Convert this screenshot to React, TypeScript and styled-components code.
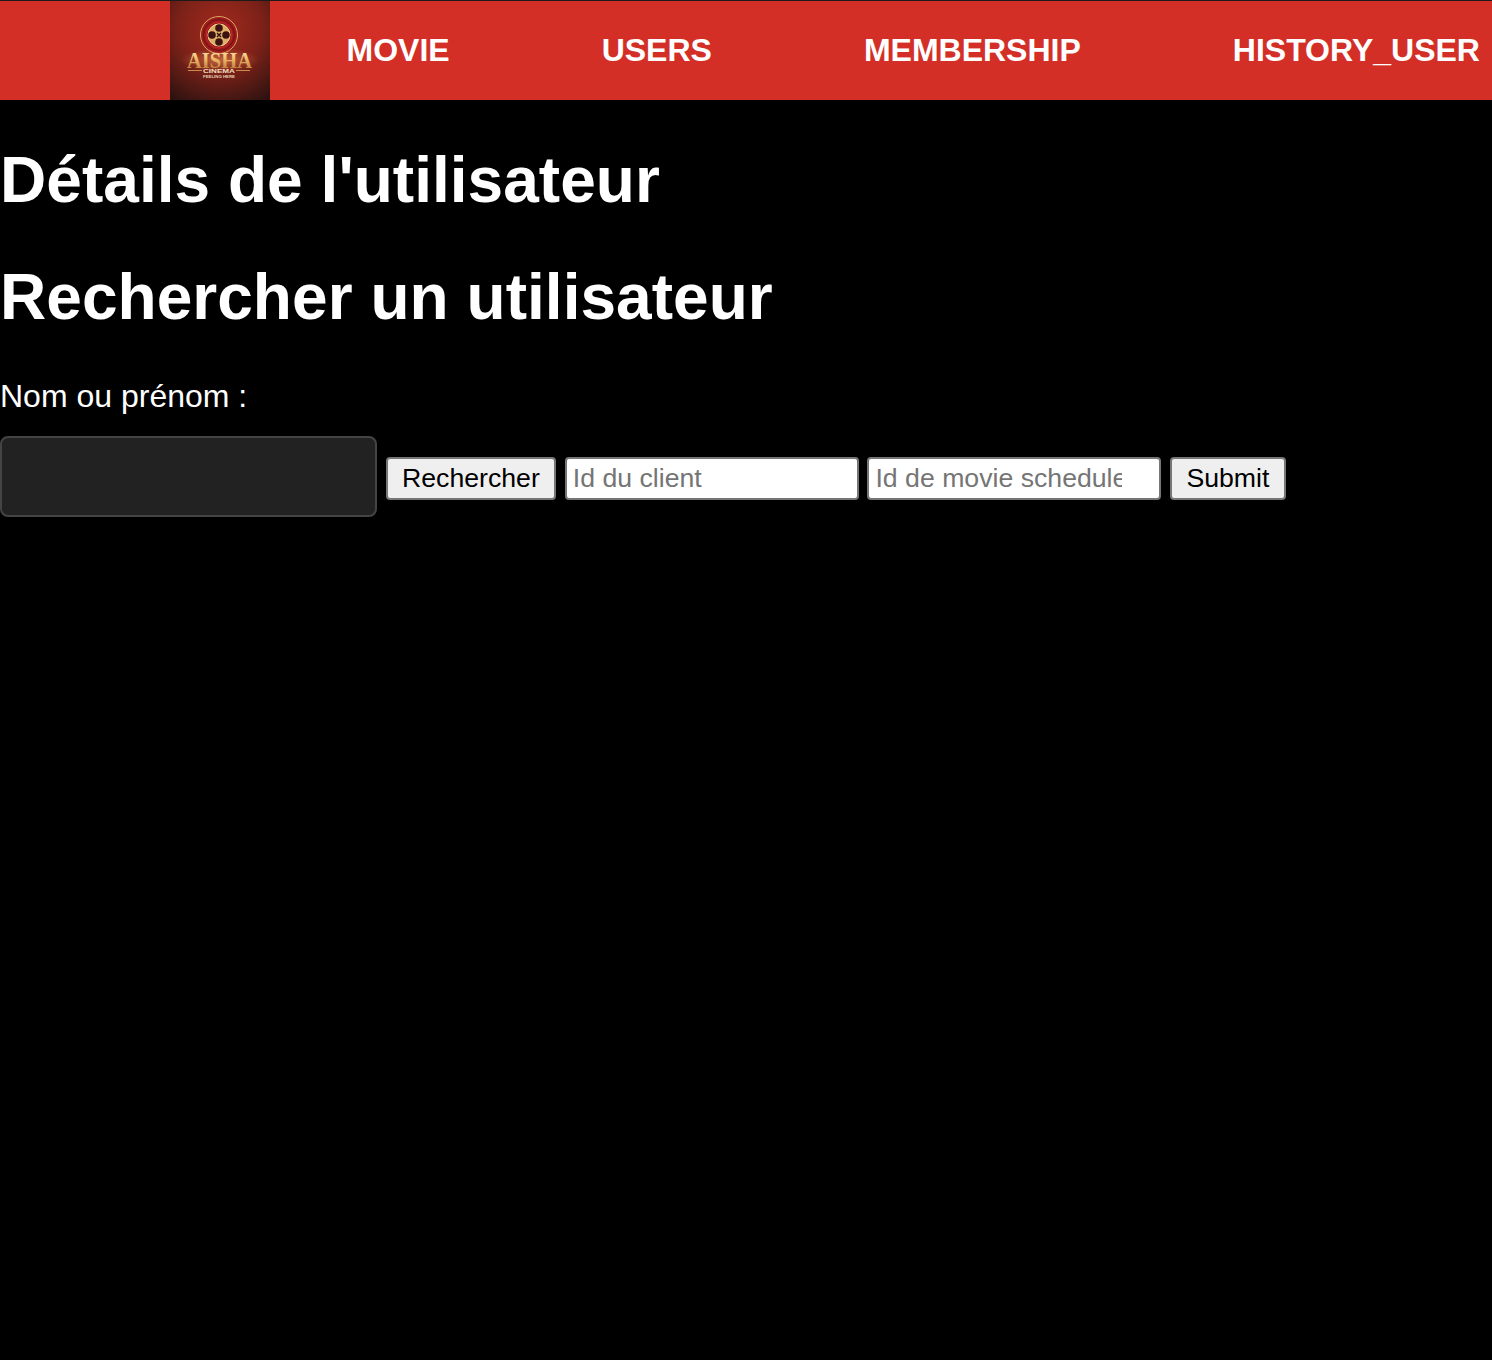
import React, { ReactElement } from 'react';
import styled, { createGlobalStyle } from 'styled-components';

const NAV_ITEMS = ['MOVIE', 'USERS', 'MEMBERSHIP', 'HISTORY_USER'];

function Logo(): ReactElement {
  return (
    <LogoBox aria-label="Aisha Cinema">
      <svg width="100" height="100" viewBox="0 0 100 100">
        <defs>
          <radialGradient id="logoBg" cx="50%" cy="28%" r="85%">
            <stop offset="0%" stopColor="#a32a1e" />
            <stop offset="50%" stopColor="#7c2118" />
            <stop offset="100%" stopColor="#2b1210" />
          </radialGradient>
          <linearGradient id="gold" x1="0" y1="0" x2="0" y2="1">
            <stop offset="0%" stopColor="#fff2c8" />
            <stop offset="45%" stopColor="#f0bc6c" />
            <stop offset="100%" stopColor="#a8642a" />
          </linearGradient>
          <radialGradient id="glow" cx="50%" cy="50%" r="50%">
            <stop offset="0%" stopColor="#ffb060" stopOpacity="0.45" />
            <stop offset="100%" stopColor="#ffb060" stopOpacity="0" />
          </radialGradient>
        </defs>
        <rect width="100" height="100" fill="url(#logoBg)" />
        <ellipse cx="50" cy="59" rx="40" ry="12" fill="url(#glow)" />
        <circle cx="49" cy="34" r="18.5" fill="#9c1a1c" stroke="#d9a860" strokeWidth="1" />
        <circle cx="49" cy="34" r="15.5" fill="none" stroke="#6f1214" strokeWidth="1" />
        <circle cx="49" cy="34" r="13" fill="none" stroke="#c22a26" strokeWidth="1" />
        <circle cx="49" cy="34" r="11" fill="#dcae66" stroke="#f6d890" strokeWidth="1" />
        <circle cx="49" cy="27" r="3.8" fill="#3e1210" />
        <circle cx="49" cy="41" r="3.8" fill="#3e1210" />
        <circle cx="42" cy="34" r="3.8" fill="#3e1210" />
        <circle cx="56" cy="34" r="3.8" fill="#3e1210" />
        <path d="M47 32l4 4M51 32l-4 4" stroke="#2a0f0e" strokeWidth="1.2" />
        <LogoTitle x="17" y="67" textLength="65" lengthAdjust="spacingAndGlyphs" fill="url(#gold)">
          AISHA
        </LogoTitle>
        <path d="M18 69.5h14M66 69.5h14" stroke="#c58f4c" strokeWidth="1" />
        <LogoSub x="33" y="72" textLength="32" lengthAdjust="spacingAndGlyphs">CINEMA</LogoSub>
        <LogoTag x="33" y="76.5" textLength="32" lengthAdjust="spacingAndGlyphs">FEELING HERE</LogoTag>
      </svg>
    </LogoBox>
  );
}

export default function App(): ReactElement {
  return (
    <>
      <GlobalStyle />
      <Nav>
        <Logo />
        <NavList>
          {NAV_ITEMS.map((item) => (
            <NavItem key={item} href="#">
              {item}
            </NavItem>
          ))}
        </NavList>
      </Nav>
      <Heading>Détails de l'utilisateur</Heading>
      <Heading>Rechercher un utilisateur</Heading>
      <SearchForm>
        <Label htmlFor="search">Nom ou prénom :</Label>
        <Row>
          <SearchInput id="search" type="text" />
          <Button type="button">Rechercher</Button>
          <TextInput type="text" placeholder="Id du client" />
          <TextInput type="text" placeholder="Id de movie schedule" />
          <Button type="button">Submit</Button>
        </Row>
      </SearchForm>
    </>
  );
}

const GlobalStyle = createGlobalStyle`
  html, body {
    margin: 0;
    background: #000;
    color: #fff;
    font-family: "Liberation Sans", Arial, sans-serif;
    overflow-x: hidden;
  }
  body {
    min-height: 1360px;
  }
`;

const Nav = styled.nav`
  display: flex;
  height: 99px;
  padding-left: 170px;
  background: #d32f27;
  border-top: 1px solid #1a1a1a;
`;

const LogoBox = styled.div`
  flex: none;
  width: 100px;
  height: 99px;
  overflow: hidden;
`;

const LogoTitle = styled.text`
  font-family: "Liberation Serif", serif;
  font-size: 24px;
  font-weight: 700;
`;

const LogoSub = styled.text`
  font-family: "Liberation Sans", sans-serif;
  font-size: 5px;
  font-weight: 700;
  fill: #f2dcc0;
`;

const LogoTag = styled.text`
  font-family: "Liberation Sans", sans-serif;
  font-size: 3px;
  font-weight: 700;
  fill: #e8d0b0;
`;

const NavList = styled.div`
  display: flex;
  flex: none;
  align-items: center;
  gap: 152px;
  padding-left: 76.5px;
`;

const NavItem = styled.a`
  color: #fff;
  font-size: 32px;
  font-weight: 700;
  text-decoration: none;
  white-space: nowrap;
`;

const Heading = styled.h1`
  margin: 43px 0;
  font-size: 64px;
  font-weight: 700;
  line-height: 74px;
  letter-spacing: 0.04px;
  white-space: nowrap;
`;

const SearchForm = styled.form`
  display: flex;
  flex-direction: column;
  padding-top: 1px;
`;

const Label = styled.label`
  font-size: 32px;
  line-height: 37px;
  margin-bottom: 21px;
`;

const Row = styled.div`
  display: flex;
  align-items: flex-start;
  gap: 8.7px;
`;

const SearchInput = styled.input`
  box-sizing: border-box;
  width: 377px;
  height: 81px;
  background: #222;
  border: 2px solid #444;
  border-radius: 8px;
  color: #fff;
`;

const Button = styled.button`
  box-sizing: border-box;
  height: 43px;
  margin-top: 21px;
  padding: 0 14.3px;
  background: #efefef;
  border: 2px solid #767676;
  border-radius: 4px;
  color: #000;
  font-family: inherit;
  font-size: 26.67px;
`;

const TextInput = styled.input`
  box-sizing: border-box;
  width: 294px;
  height: 43px;
  margin-top: 21px;
  padding: 1px 37px 1px 6px;
  background: #fff;
  border: 2px solid #767676;
  border-radius: 4px;
  font-family: inherit;
  font-size: 26.67px;

  &::placeholder {
    color: #757575;
  }
`;
